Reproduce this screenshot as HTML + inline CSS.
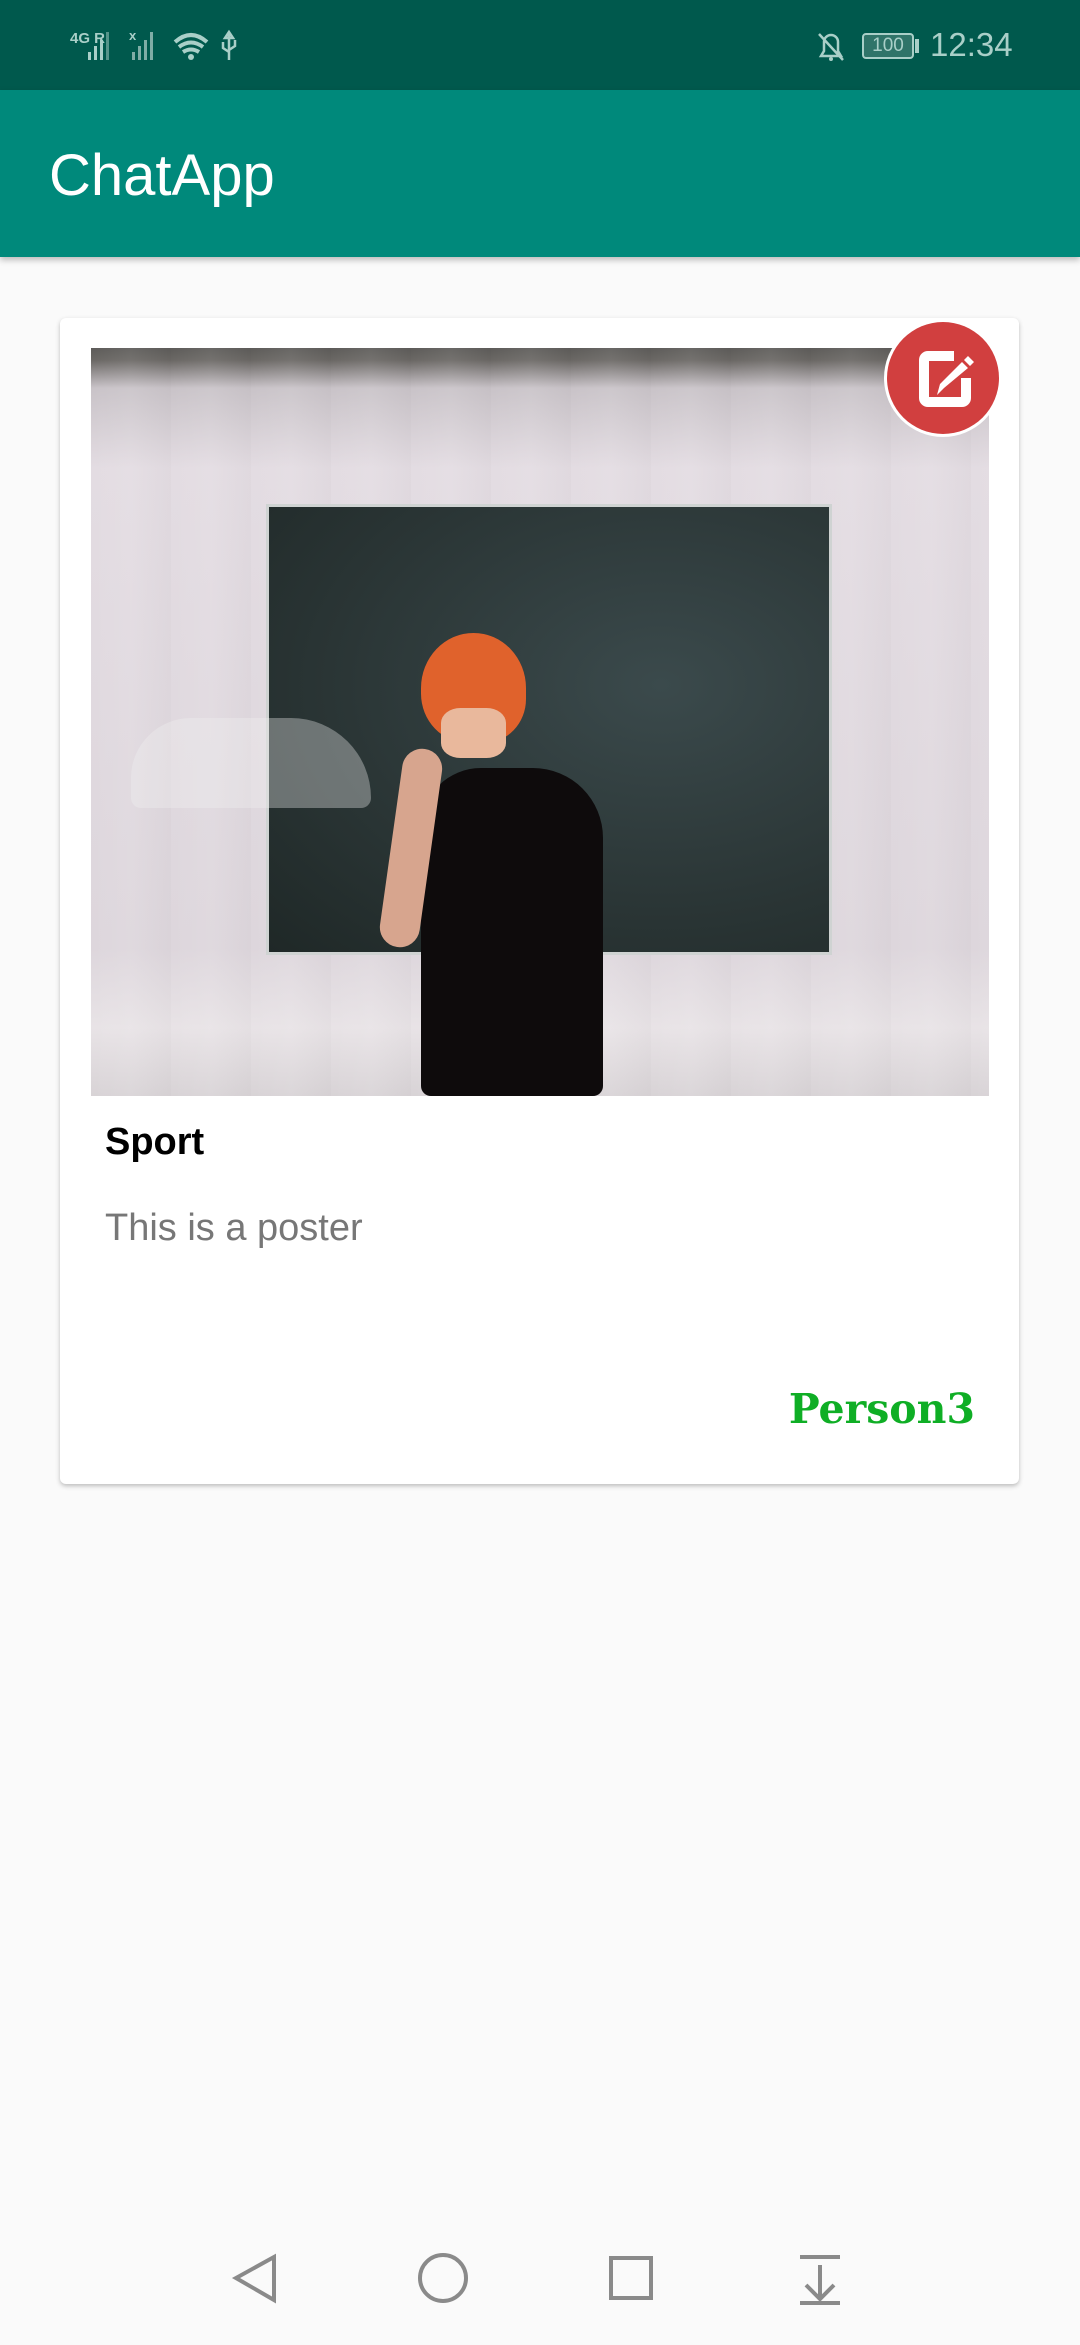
<!DOCTYPE html>
<html><head><meta charset="utf-8"><style>
*{margin:0;padding:0;box-sizing:border-box}
body{width:1080px;height:2340px;background:#fafafa;font-family:"Liberation Sans",Roboto,sans-serif;position:relative;overflow:hidden}
.sb{position:absolute;left:0;top:0;width:1080px;height:90px;background:#00594d;color:#a9cfc8}
.ab{position:absolute;left:0;top:90px;width:1080px;height:167px;background:#00897b;box-shadow:0 3px 6px rgba(0,0,0,.25)}
.ab span{position:absolute;left:49px;top:52px;color:#fff;font-size:58px}
.card{position:absolute;left:60px;top:318px;width:959px;height:1166px;background:#fff;border-radius:6px;box-shadow:0 2px 5px rgba(0,0,0,.25)}
.img{position:absolute;left:91px;top:348px;width:898px;height:748px;overflow:hidden;background:linear-gradient(180deg,#5d5b59 0,#6a6764 12px,#c9c3c8 40px,#e3dce2 120px,#ddd6dc 600px,#e8e3e6 680px,#d8d3d6 748px)}
.nav{position:absolute;left:0;top:2215px;width:1080px;height:125px;background:#fafafa}
</style></head><body>
<div class="sb">
<div style="position:absolute;left:70px;top:30px;font-size:15px;font-weight:bold">4G R</div>
<svg style="position:absolute;left:85px;top:28px" width="170" height="36">
<g fill="#a9cfc8"><rect x="3" y="24" width="3" height="8"/><rect x="9" y="18" width="3" height="14"/><rect x="15" y="12" width="3" height="20"/><rect x="21" y="4" width="3" height="28" opacity=".5"/></g>
<g fill="#7fada6"><rect x="47" y="24" width="3" height="8"/><rect x="53" y="18" width="3" height="14"/><rect x="59" y="12" width="3" height="20"/><rect x="65" y="4" width="3" height="28"/></g>
<text x="44" y="12" font-size="13" fill="#a9cfc8" font-weight="bold">x</text>
<path d="M90 14 q16-14 32 0 M94 19 q12-9 24 0 M98 24 q8-5 16 0" stroke="#a9cfc8" stroke-width="4" fill="none"/>
<circle cx="106" cy="29" r="3" fill="#a9cfc8"/>
<path d="M144 4 v28 M144 4 l-4 6 h8 z M138 14 v6 l6 4 M150 12 v6 l-6 4" stroke="#a9cfc8" stroke-width="2.5" fill="none"/>
</svg>
<svg style="position:absolute;left:815px;top:28px" width="60" height="36"><path d="M6 28 h20 l-3-5 v-9 a7 7 0 0 0-14 0 v9 z M4 6 l24 26" stroke="#a9cfc8" stroke-width="2.5" fill="none"/><circle cx="16" cy="31" r="2" fill="#a9cfc8"/></svg>
<div style="position:absolute;left:862px;top:33px;width:52px;height:26px;border:2px solid #a9cfc8;border-radius:4px;font-size:19px;text-align:center;line-height:22px;background:#2f7469">100</div>
<div style="position:absolute;left:915px;top:39px;width:4px;height:14px;background:#a9cfc8"></div>
<div style="position:absolute;left:930px;top:26px;font-size:33px">12:34</div>
</div>
<div class="ab"><span>ChatApp</span></div>
<div class="card"></div>
<div class="img">
<div style="position:absolute;left:0;top:0;width:898px;height:748px;background:repeating-linear-gradient(90deg,rgba(255,255,255,0) 0,rgba(255,255,255,.07) 40px,rgba(0,0,0,.015) 80px)"></div>
<div style="position:absolute;left:175px;top:156px;width:566px;height:451px;background:radial-gradient(ellipse at 70% 40%,#3b4a4c,#2a3535 60%,#1f2827);border:3px solid #cfd3d2"></div>
<div style="position:absolute;left:40px;top:370px;width:240px;height:90px;border-radius:60px 80px 10px 10px;background:rgba(240,240,242,.35)"></div>
<div style="position:absolute;left:330px;top:285px;width:105px;height:110px;border-radius:50% 50% 40% 45%;background:#e0622c"></div>
<div style="position:absolute;left:350px;top:360px;width:65px;height:50px;background:#e9b89c;border-radius:30%"></div>
<div style="position:absolute;left:330px;top:420px;width:182px;height:328px;border-radius:60px 70px 10px 10px;background:#0e0b0c"></div>
<div style="position:absolute;left:300px;top:400px;width:40px;height:200px;border-radius:20px;background:#d7a58e;transform:rotate(8deg)"></div>
</div>
<svg style="position:absolute;left:882px;top:318px" width="122" height="122">
<circle cx="61" cy="60" r="59" fill="#fff"/><circle cx="61" cy="60" r="56" fill="#d13f3f"/>
<path d="M72 38 H46 a4 4 0 0 0-4 4 v38 a4 4 0 0 0 4 4 h34 a4 4 0 0 0 4-4 v-20" stroke="#fff" stroke-width="10" fill="none"/>
<path d="M62 70 l-7 7 l3-11 l22-22 l6 6 z M82 42 l4-4 l6 6 l-4 4 z" fill="#fff"/>
</svg>
<div style="position:absolute;left:105px;top:1121px;font-size:38px;font-weight:bold;color:#000">Sport</div>
<div style="position:absolute;left:105px;top:1207px;font-size:38px;color:#777">This is a poster</div>
<div style="position:absolute;right:105px;top:1385px;font-size:41px;font-weight:bold;color:#0fae25;font-family:'DejaVu Serif','Liberation Serif',serif">Person3</div>
<div class="nav">
<svg width="1080" height="125"><g stroke="#8a8a8a" stroke-width="4" fill="none">
<path d="M274 42 L236 63 L274 85 Z"/><circle cx="443" cy="63" r="23"/><rect x="611" y="43" width="40" height="40"/>
<path d="M800 42 h40 M820 50 v34 M806 70 l14 14 l14-14 M800 88 h40"/></g></svg>
</div>
</body></html>
